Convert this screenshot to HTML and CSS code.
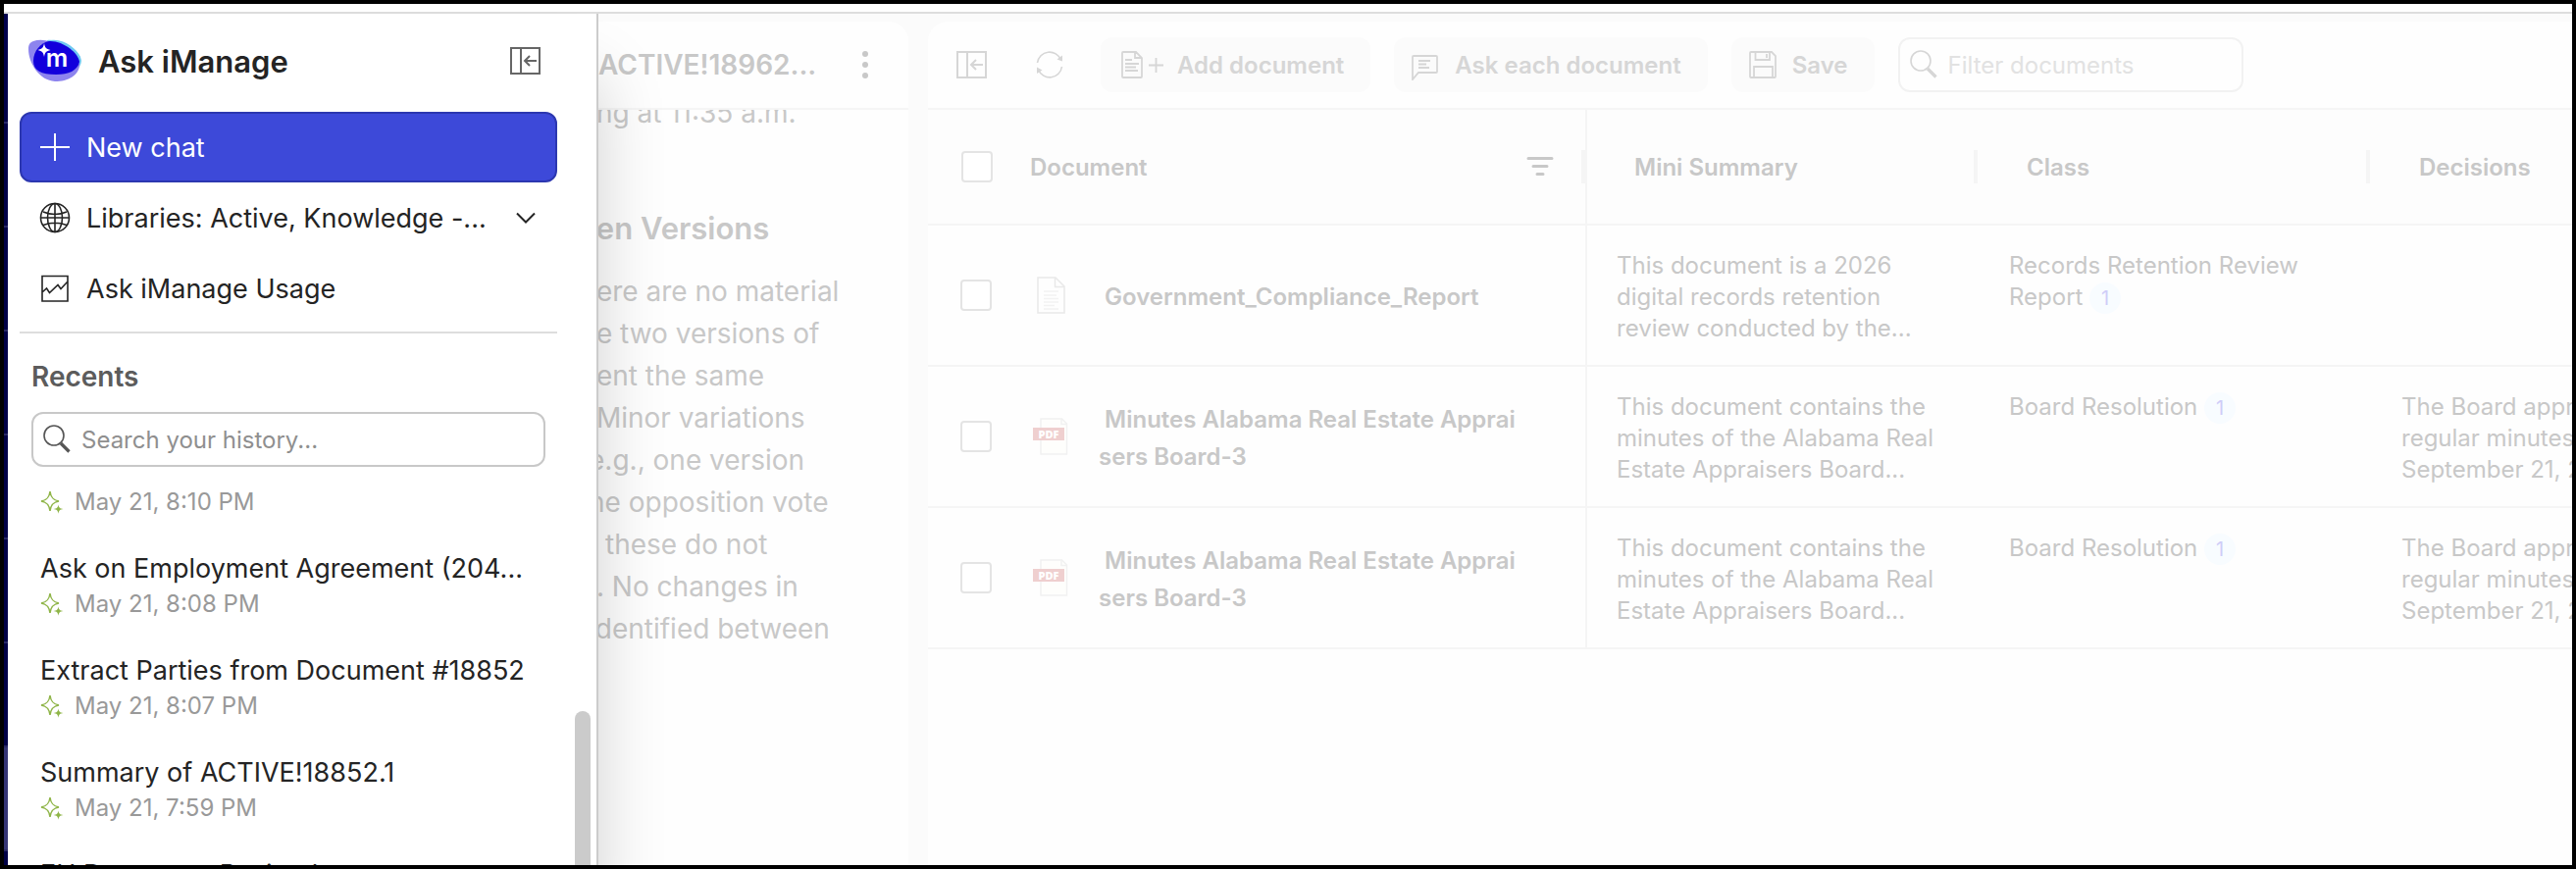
FILE: index.html
```html
<!DOCTYPE html>
<html lang="en">
<head>
    <meta charset="UTF-8">
    <meta name="viewport" content="width=device-width, initial-scale=1.0">
    <title>Ask iManage</title>
    <link rel="stylesheet" href="styles.css">
</head>
<body>

<!-- Shared icons -->
<svg class="sprite" aria-hidden="true">
    <symbol id="icon-collapse" viewBox="0 0 32 32">
        <path d="M1 3H30V29H1ZM11 3V29M27 16H15.500M20 11L15 16L20 21" fill="none" stroke="currentColor" stroke-width="2"/>
    </symbol>
    <symbol id="icon-search" viewBox="0 0 32 32">
        <circle cx="13" cy="12" r="10" fill="none" stroke="currentColor" stroke-width="1.600"/>
        <path d="M20 20L28.500 28.500" fill="none" stroke="currentColor" stroke-width="3.200"/>
    </symbol>
    <symbol id="icon-sparkle" viewBox="0 0 24 24">
        <path d="M10 1C10.800 7 13 10 19 11C13 12 10.800 15 10 21C9.200 15 7 12 1 11C7 10 9.200 7 10 1Z" fill="none" stroke="currentColor" stroke-width="1.500"/>
        <path d="M18.500 14.500C19 17.500 20 18.500 23.500 19C20 19.500 19 20.500 18.500 23.800C18 20.500 17 19.500 13.500 19C17 18.500 18 17.500 18.500 14.500Z" fill="currentColor"/>
    </symbol>
    <symbol id="icon-pdf" viewBox="0 0 36 38">
        <path d="M8 1H29.500L34.500 6V37H8Z" fill="#fefefc" stroke="#f1f1f1" stroke-width="1.500"/>
        <path d="M29 1V6.500H34.500" fill="none" stroke="#f1f1f1" stroke-width="1.500"/>
        <rect x="0" y="10" width="32" height="13" fill="#efcfcf"/>
        <text x="16" y="20.500" text-anchor="middle" class="pdf-text">PDF</text>
    </symbol>
</svg>

<div class="app">
    <div class="rail">
        <div class="rail-item"></div>
        <div class="rail-item"></div>
        <div class="rail-item"></div>
        <div class="rail-item"></div>
        <div class="rail-item"></div>
        <div class="rail-item"></div>
        <div class="rail-item"></div>
        <div class="rail-item active"></div>
    </div>

    <main class="workspace">
        <section class="panel chat">
            <header class="panel-header chat-header">
                <h2>ACTIVE!18962...</h2>
                <button class="icon-button" aria-label="More options">
                    <svg width="12" height="32" viewBox="0 0 12 32" fill="currentColor"><circle cx="6" cy="5" r="3"/><circle cx="6" cy="16" r="3"/><circle cx="6" cy="27" r="3"/></svg>
                </button>
            </header>
            <div class="chat-body">
                <p class="chat-text"> ng at 11:35 a.m.</p>
                <h3 class="chat-text"> en Versions</h3>
                <p class="chat-text"> ere are no material
 e two versions of
 ent the same
 Minor variations
e.g., one version
he opposition vote
t these do not
 . No changes in
identified between</p>
            </div>
        </section>

        <section class="panel documents">
            <header class="panel-header toolbar">
                <button class="icon-button" aria-label="Collapse panel"><svg width="34" height="32"><use href="#icon-collapse"/></svg></button>
                <button class="icon-button" aria-label="Refresh">
                    <svg width="32" height="32" viewBox="0 0 32 32" fill="none" stroke="currentColor" stroke-width="1.600"><path d="M3.500 14A12.500 12.500 0 0 1 27.500 11M28.500 18A12.500 12.500 0 0 1 4.500 21"/><path d="M29 6.500V12.500L23.500 10.500ZM3 25V18.500L8.500 21.500Z" fill="currentColor" stroke="none"/></svg>
                </button>
                <button class="tool-button">
                    <svg width="48" height="32" viewBox="0 0 48 32" fill="none" stroke="currentColor" stroke-width="1.800"><path d="M4 4Q4 3 5 3H18L24 9V28Q24 29 23 29H5Q4 29 4 28ZM17 3V9H24M7 11H14M7 15H21M7 18.500H18M7 22H20M31 16.500H46M38.500 9V24"/></svg>
                    Add document
                </button>
                <button class="tool-button">
                    <svg width="32" height="32" viewBox="0 0 32 32" fill="none" stroke="currentColor" stroke-width="1.800"><path d="M1 31V8Q1 7 2 7H25Q26 7 26 8V23Q26 24 25 24H7ZM7 12H19M7 15.500H15M7 19H18"/></svg>
                    Ask each document
                </button>
                <button class="tool-button">
                    <svg width="32" height="32" viewBox="0 0 32 32" fill="none" stroke="currentColor" stroke-width="1.800"><path d="M1 4Q1 3 2 3H23L27 7V28Q27 29 26 29H2Q1 29 1 28ZM6.500 3V11H21V3M18 5V9M5 29V18H24V29"/></svg>
                    Save
                </button>
                <label class="filter-box">
                    <svg width="32" height="32"><use href="#icon-search"/></svg>
                    <input type="text" placeholder="Filter documents" aria-label="Filter documents">
                </label>
            </header>

            <table class="doc-table">
                <colgroup>
                    <col class="col-document">
                    <col class="col-data">
                    <col class="col-data">
                    <col class="col-data">
                </colgroup>
                <thead>
                    <tr>
                        <th class="pinned">
                            <div class="head-cell">
                                <input type="checkbox" aria-label="Select all documents">
                                <span class="head-label">Document</span>
                                <svg class="sort-icon" width="32" height="32" viewBox="0 0 32 32" stroke="currentColor" stroke-width="3" stroke-linecap="round"><path d="M4 7.500H28M9 15.500H23M13 23.500H19"/></svg>
                            </div>
                        </th>
                        <th><div class="head-cell">Mini Summary</div></th>
                        <th><div class="head-cell">Class</div></th>
                        <th><div class="head-cell">Decisions</div></th>
                    </tr>
                </thead>
                <tbody>
                    <tr>
                        <td class="pinned">
                            <div class="doc-cell">
                                <input type="checkbox" aria-label="Select Government_Compliance_Report">
                                <svg width="36" height="38" viewBox="0 0 36 38" fill="none" stroke="#e9e9e9" stroke-width="1.500"><path d="M5 1H23L32 10V37H5ZM22.500 1V10.500H32"/><path d="M11 15H26M11 19H24M11 22.500H26M11 26H26M11 29.500H22M11 33H26" stroke="#f2f2f2"/></svg>
                                <span class="doc-name">&nbsp;Government_Compliance_Report</span>
                            </div>
                        </td>
                        <td>This document is a 2026<br>digital records retention<br>review conducted by the...</td>
                        <td>Records Retention Review<br>Report <span class="cite">1</span></td>
                        <td></td>
                    </tr>
                    <tr>
                        <td class="pinned">
                            <div class="doc-cell">
                                <input type="checkbox" aria-label="Select Minutes Alabama Real Estate Appraisers Board-3">
                                <svg width="36" height="38"><use href="#icon-pdf"/></svg>
                                <span class="doc-name">&nbsp;Minutes Alabama Real Estate Apprai<wbr>sers Board-3</span>
                            </div>
                        </td>
                        <td>This document contains the<br>minutes of the Alabama Real<br>Estate Appraisers Board...</td>
                        <td>Board Resolution <span class="cite">1</span></td>
                        <td>The Board approved<br>regular minutes of<br>September 21, 2023</td>
                    </tr>
                    <tr>
                        <td class="pinned">
                            <div class="doc-cell">
                                <input type="checkbox" aria-label="Select Minutes Alabama Real Estate Appraisers Board-3, copy">
                                <svg width="36" height="38"><use href="#icon-pdf"/></svg>
                                <span class="doc-name">&nbsp;Minutes Alabama Real Estate Apprai<wbr>sers Board-3</span>
                            </div>
                        </td>
                        <td>This document contains the<br>minutes of the Alabama Real<br>Estate Appraisers Board...</td>
                        <td>Board Resolution <span class="cite">1</span></td>
                        <td>The Board approved<br>regular minutes of<br>September 21, 2023</td>
                    </tr>
                </tbody>
            </table>
        </section>
    </main>

    <!-- Drawer -->
    <aside class="sidebar">
        <div class="brand">
            <svg width="56" height="44" viewBox="0 0 56 44">
                <path d="M20 1C34 -1 54 12 55 22C54 32 44 36 30 34Z" fill="#6fc8f2"/>
                <path d="M6 2C20 -3 40 8 53 24C54 36 42 43 28 43C12 42 1 24 1 10C1 5 3 3 6 2Z" fill="#8d84ee"/>
                <path d="M24 1C36 -1 50 9 54 18L53 25C44 16 34 8 24 1Z" fill="#6fc8f2"/>
                <path d="M22 2C36 1 52 14 53 23C51 32 42 36 29 36C14 36 6 32 6 22C6 12 14 3 22 2Z" fill="#1200dc"/>
                <path d="M17 4C17.700 8.500 19 10 23.500 11C19 12 17.700 13.500 17 18C16.300 13.500 15 12 10.500 11C15 10 16.300 8.500 17 4Z" fill="#fff"/>
                <text x="30" y="28" text-anchor="middle" class="logo-text">m</text>
            </svg>
            <h1>Ask iManage</h1>
            <button class="icon-button" aria-label="Close sidebar"><svg width="34" height="32"><use href="#icon-collapse"/></svg></button>
        </div>

        <nav class="menu">
            <button class="menu-item new-chat">
                <svg width="32" height="32" viewBox="0 0 32 32" stroke="currentColor" stroke-width="2"><path d="M1 16H31M16 2V30"/></svg>
                <span>New chat</span>
            </button>
            <button class="menu-item">
                <svg width="32" height="32" viewBox="0 0 32 32" fill="none" stroke="currentColor" stroke-width="1.600"><circle cx="16" cy="16" r="14.500"/><ellipse cx="16" cy="16" rx="7.500" ry="14.500"/><path d="M16 1.500V30.500M1.500 16H30.500M4 10Q16 15 28 10M4 23.500Q16 19 28 23.500"/></svg>
                <span class="menu-label">Libraries: Active, Knowledge -...</span>
                <svg width="24" height="24" viewBox="0 0 24 24" fill="none" stroke="currentColor" stroke-width="2"><path d="M3 7.500L12 16.500L21 7.500"/></svg>
            </button>
            <button class="menu-item">
                <svg width="32" height="32" viewBox="0 0 32 32" fill="none" stroke="currentColor" stroke-width="1.600"><path d="M3 3.500H29V29H3ZM3 20L7.500 16L10.500 20.500L19 12.500L22 16.500L29 9"/></svg>
                <span>Ask iManage Usage</span>
            </button>
        </nav>

        <div class="recents">
            <h2>Recents</h2>
            <label class="search-box">
                <svg width="32" height="32"><use href="#icon-search"/></svg>
                <input type="text" placeholder="Search your history..." aria-label="Search your history">
            </label>
        </div>

        <ul class="history">
            <li>
                <div class="history-date"><svg width="24" height="24"><use href="#icon-sparkle"/></svg>May 21, 8:10 PM</div>
            </li>
            <li>
                <a href="#" class="history-title">Ask on Employment Agreement (204...</a>
                <div class="history-date"><svg width="24" height="24"><use href="#icon-sparkle"/></svg>May 21, 8:08 PM</div>
            </li>
            <li>
                <a href="#" class="history-title">Extract Parties from Document #18852</a>
                <div class="history-date"><svg width="24" height="24"><use href="#icon-sparkle"/></svg>May 21, 8:07 PM</div>
            </li>
            <li>
                <a href="#" class="history-title">Summary of ACTIVE!18852.1</a>
                <div class="history-date"><svg width="24" height="24"><use href="#icon-sparkle"/></svg>May 21, 7:59 PM</div>
            </li>
            <li>
                <a href="#" class="history-title">EU Document Revised</a>
            </li>
        </ul>
        <div class="scroll-thumb"></div>
    </aside>
</div>

</body>
</html>
```

FILE: styles.css
```css
* {
    box-sizing: border-box;
}

body {
    margin: 0;
    padding: 4px;
    height: 100vh;
    background: #000;
    font-family: Inter, "Liberation Sans", sans-serif;
    font-size: 24px;
    overflow: hidden;
}

h1, h2, h3, p, ul {
    margin: 0;
    padding: 0;
}

button, input {
    font: inherit;
    color: inherit;
}

svg {
    flex: none;
}

.sprite {
    display: none;
}

.app {
    position: relative;
    display: flex;
    height: 100%;
    border-top: 8px solid #fff;
    background: #fff;
    overflow: hidden;
}

/* Navigation rail */
.rail {
    flex: none;
    width: 4px;
    padding-top: 6px;
    border-top: 2px solid #ddd;
    background: #00004d;
}

.rail-item {
    height: 106px;
    border-bottom: 2px solid #2c2c70;
}

.rail-item.active {
    background: #3a3a80;
}

/* Workspace behind the drawer */
.workspace {
    flex: 1;
    min-width: 0;
    display: flex;
    gap: 20px;
    padding-top: 8px;
    border-top: 2px solid #ddd;
    background: #fbfbfb;
    color: #c8c8c8;
}

.panel {
    background: #fefefe;
    overflow: hidden;
}

.panel-header {
    display: flex;
    align-items: center;
    height: 90px;
    border-bottom: 2px solid #f5f5f5;
}

.chat {
    flex: none;
    width: 918px;
    border-radius: 0 20px 0 0;
}

.chat-header {
    justify-content: space-between;
    padding: 0 38px 0 602px;
}

.chat-header h2 {
    font-size: 28px;
    font-weight: 600;
}

.chat-body {
    padding-left: 592px;
    font-size: 28px;
    line-height: 43px;
    overflow: hidden;
}

.chat-text {
    white-space: pre;
}

.chat-body p:first-child {
    margin-top: -18px;
}

.chat-body h3 {
    margin: 74px 0 22px;
    font-size: 31px;
    font-weight: 600;
}

.documents {
    flex: 1;
    min-width: 0;
    border-radius: 20px 0 0 0;
}

.icon-button {
    display: flex;
    padding: 0;
    border: none;
    background: none;
    cursor: pointer;
}

/* Toolbar */
.toolbar {
    gap: 24px;
    padding-left: 28px;
    color: #d6d6d6;
}

.toolbar .icon-button + .icon-button {
    margin: 0 12px 0 22px;
}

.tool-button {
    display: flex;
    align-items: center;
    gap: 12px;
    height: 56px;
    padding: 0 27px 0 18px;
    border: none;
    border-radius: 12px;
    background: #fbfbfb;
    font-weight: 600;
    white-space: nowrap;
}

.filter-box,
.search-box {
    display: flex;
    align-items: center;
    gap: 9px;
    height: 56px;
    padding: 0 8px;
    border: 2px solid #c8c8c8;
    border-radius: 12px;
}

.filter-box {
    width: 352px;
    border-color: #f2f2f2;
}

.filter-box input,
.search-box input {
    flex: 1;
    min-width: 0;
    padding: 0;
    border: none;
    outline: none;
    background: none;
}

.filter-box input::placeholder {
    color: #e2e2e2;
}

/* Documents table */
.doc-table {
    width: 1872px;
    table-layout: fixed;
    border-collapse: separate;
    border-spacing: 0;
}

.col-document {
    width: 672px;
}

.col-data {
    width: 400px;
}

.doc-table th {
    height: 118px;
    padding: 0 2px 0 0;
    border-bottom: 2px solid #f5f5f5;
    background: #fdfdfd;
    font-weight: 600;
    text-align: left;
}

.doc-table td {
    height: 144px;
    padding: 25px 0 0 30px;
    border-bottom: 2px solid #f5f5f5;
    line-height: 32px;
    vertical-align: top;
    white-space: nowrap;
}

.doc-table .pinned {
    padding: 0;
    border-right: 2px solid #f5f5f5;
    vertical-align: middle;
}

.head-cell {
    display: flex;
    align-items: center;
    height: 34px;
    padding-left: 48px;
    border-right: 4px solid #f5f5f5;
}

.pinned .head-cell {
    padding: 0 26px 0 34px;
}

.head-label {
    flex: 1;
    padding-left: 38px;
}

.doc-cell {
    display: flex;
    align-items: center;
    padding-left: 33px;
}

.doc-cell svg {
    margin: 0 31px 0 42px;
}

.doc-name {
    width: 440px;
    padding-top: 4px;
    font-weight: 600;
    line-height: 38px;
    white-space: normal;
}

input[type="checkbox"] {
    appearance: none;
    flex: none;
    width: 32px;
    height: 32px;
    margin: 0;
    border: 2px solid #e4e4e4;
    border-radius: 4px;
    background: #fff;
}

.cite {
    display: inline-block;
    width: 32px;
    border-radius: 16px;
    background: #f8fcff;
    color: #cfcdf8;
    font-size: 20px;
    text-align: center;
}

.pdf-text {
    fill: #fff;
    font-family: "Open Sans", sans-serif;
    font-size: 11px;
    font-weight: 800;
}

/* Drawer */
.sidebar {
    position: absolute;
    top: 2px;
    bottom: 0;
    left: 4px;
    display: flex;
    flex-direction: column;
    width: 602px;
    border-right: 2px solid #ccc;
    background: #fff;
    color: #242424;
    font-size: 27px;
    box-shadow: 0 64px 64px rgba(0, 0, 0, 0.18);
}

.brand {
    display: flex;
    align-items: center;
    height: 92px;
    padding: 4px 55px 0 20px;
}

.brand h1 {
    flex: 1;
    padding-left: 16px;
    font-size: 31px;
    font-weight: 600;
}

.brand .icon-button {
    color: #666;
}

.logo-text {
    fill: #fff;
    font-size: 25px;
    font-weight: 600;
}

.menu {
    margin: 8px 40px 0 12px;
    padding-bottom: 8px;
    border-bottom: 2px solid #ddd;
}

.menu-item {
    display: flex;
    align-items: center;
    gap: 16px;
    width: 100%;
    height: 72px;
    padding: 0 18px;
    border: 2px solid transparent;
    border-radius: 12px;
    background: none;
    text-align: left;
    white-space: nowrap;
    cursor: pointer;
}

.new-chat {
    border-color: #2c37b0;
    background: #3d49d9;
    color: #fff;
}

.menu-label {
    flex: 1;
}

.recents {
    padding: 26px 52px 0 24px;
}

.recents h2 {
    margin-bottom: 18px;
    color: #5c5c5c;
    font-size: 28px;
    font-weight: 600;
    line-height: 36px;
}

.search-box {
    color: #555;
    font-size: 24px;
}

.search-box input::placeholder {
    color: #8f8f8f;
}

.history {
    flex: 1;
    min-height: 0;
    margin-top: 20px;
    padding-left: 33px;
    overflow: hidden;
    list-style: none;
    white-space: nowrap;
}

.history li {
    margin-bottom: 32px;
}

.history-title {
    display: block;
    color: inherit;
    line-height: 40px;
    text-decoration: none;
}

.history-date {
    display: flex;
    align-items: center;
    gap: 11px;
    color: #999;
    font-size: 24px;
    line-height: 32px;
}

.history-date svg {
    color: #8fb548;
}

.scroll-thumb {
    position: absolute;
    right: 6px;
    bottom: 0;
    width: 16px;
    height: 157px;
    border-radius: 8px 8px 0 0;
    background: #cbcbcb;
}
```
